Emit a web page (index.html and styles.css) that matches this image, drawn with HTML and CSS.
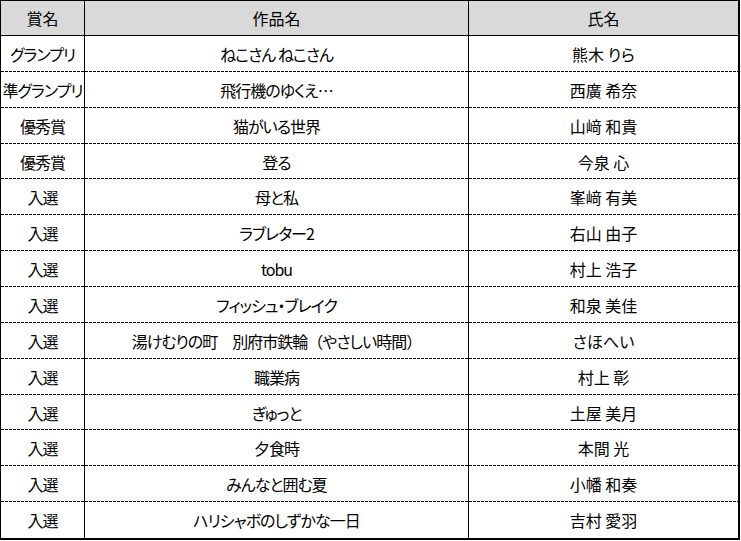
FILE: index.html
```html
<!DOCTYPE html>
<html lang="ja">
<head>
  <meta charset="UTF-8">
  <title>入賞作品一覧</title>
  <link rel="stylesheet" href="styles.css">
</head>
<body>
  <table class="awards">
    <colgroup>
      <col class="col-prize">
      <col class="col-title">
      <col class="col-name">
    </colgroup>
    <thead>
      <tr>
        <th>賞名</th>
        <th>作品名</th>
        <th>氏名</th>
      </tr>
    </thead>
    <tbody>
      <tr><td>グランプリ</td><td>ねこさん ねこさん</td><td>熊木 りら</td></tr>
      <tr><td>準グランプリ</td><td>飛行機のゆくえ…</td><td>西廣 希奈</td></tr>
      <tr><td>優秀賞</td><td>猫がいる世界</td><td>山﨑 和貴</td></tr>
      <tr><td>優秀賞</td><td>登る</td><td>今泉 心</td></tr>
      <tr><td>入選</td><td>母と私</td><td>峯﨑 有美</td></tr>
      <tr><td>入選</td><td>ラブレター2</td><td>右山 由子</td></tr>
      <tr><td>入選</td><td>tobu</td><td>村上 浩子</td></tr>
      <tr><td>入選</td><td>フィッシュ・ブレイク</td><td>和泉 美佳</td></tr>
      <tr><td>入選</td><td>湯けむりの町　別府市鉄輪<span class="full">（</span>やさしい時間<span class="full">）</span></td><td>さほへい</td></tr>
      <tr><td>入選</td><td>職業病</td><td>村上 彰</td></tr>
      <tr><td>入選</td><td>ぎゅっと</td><td>土屋 美月</td></tr>
      <tr><td>入選</td><td>夕食時</td><td>本間 光</td></tr>
      <tr><td>入選</td><td>みんなと囲む夏</td><td>小幡 和奏</td></tr>
      <tr><td>入選</td><td>ハリシャボのしずかな一日</td><td>吉村 愛羽</td></tr>
    </tbody>
  </table>
</body>
</html>
```

FILE: styles.css
```css
body {
  margin: 0;
  background-color: #ffffff;
  font-family: "Noto Sans CJK JP", "Noto Sans", sans-serif;
  color: #000000;
}
.awards {
  width: 740px;
  table-layout: fixed;
  border-collapse: separate;
  border-spacing: 0;
  border-top: 1px solid #000000;
  border-left: 1px solid #000000;
  border-right: 2px solid #000000;
  border-bottom: 2px solid #000000;
  font-size: 16px;
  font-feature-settings: "palt";
}
.col-prize {
  width: 84px;
}
.col-title {
  width: 384px;
}
.col-name {
  width: 269px;
}
.awards th,
.awards td {
  padding: 0;
  text-align: center;
  vertical-align: middle;
  font-weight: 400;
  line-height: 1;
  border-right: 1px solid #000000;
  white-space: nowrap;
}
.awards th:last-child,
.awards td:last-child {
  border-right: none;
}
.awards thead tr {
  height: 35px;
}
.awards th {
  background-color: #d9d9d9;
  border-bottom: 1px solid #000000;
}
.awards tbody tr {
  height: 35.86px;
}
.awards td {
  /* dashed hairline like the spreadsheet grid */
  background: repeating-linear-gradient(to right, #000000 0 3px, transparent 3px 4px) left bottom / 100% 1px no-repeat;
}
.awards td:not(:last-child) {
  letter-spacing: -1px; /* kana in the sheet font run narrower */
}
.awards tbody tr:last-child td {
  background: none;
}
/* full-width brackets, as in the sheet */
.full {
  font-feature-settings: normal;
}
```
